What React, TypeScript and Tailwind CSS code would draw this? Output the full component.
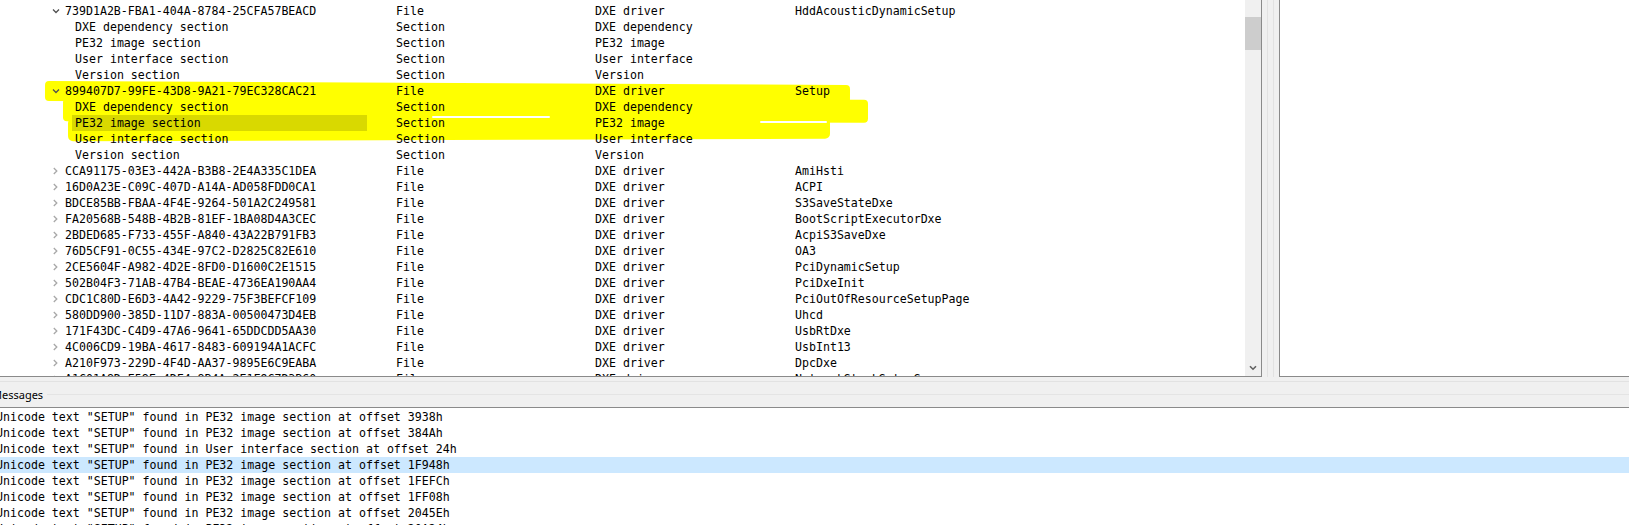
import React from "react";

type TreeRow = {
  name: string;
  parent?: boolean;
  open?: boolean;
  type: string;
  sub: string;
  text?: string;
  selected?: boolean;
};

const sections = (selectedPe32 = false): TreeRow[] => [
  { name: "DXE dependency section", type: "Section", sub: "DXE dependency" },
  { name: "PE32 image section", type: "Section", sub: "PE32 image", selected: selectedPe32 },
  { name: "User interface section", type: "Section", sub: "User interface" },
  { name: "Version section", type: "Section", sub: "Version" },
];

const drivers: [string, string][] = [
  ["CCA91175-03E3-442A-B3B8-2E4A335C1DEA", "AmiHsti"],
  ["16D0A23E-C09C-407D-A14A-AD058FDD0CA1", "ACPI"],
  ["BDCE85BB-FBAA-4F4E-9264-501A2C249581", "S3SaveStateDxe"],
  ["FA20568B-548B-4B2B-81EF-1BA08D4A3CEC", "BootScriptExecutorDxe"],
  ["2BDED685-F733-455F-A840-43A22B791FB3", "AcpiS3SaveDxe"],
  ["76D5CF91-0C55-434E-97C2-D2825C82E610", "OA3"],
  ["2CE5604F-A982-4D2E-8FD0-D1600C2E1515", "PciDynamicSetup"],
  ["502B04F3-71AB-47B4-BEAE-4736EA190AA4", "PciDxeInit"],
  ["CDC1C80D-E6D3-4A42-9229-75F3BEFCF109", "PciOutOfResourceSetupPage"],
  ["580DD900-385D-11D7-883A-00500473D4EB", "Uhcd"],
  ["171F43DC-C4D9-47A6-9641-65DDCDD5AA30", "UsbRtDxe"],
  ["4C006CD9-19BA-4617-8483-609194A1ACFC", "UsbInt13"],
  ["A210F973-229D-4F4D-AA37-9895E6C9EABA", "DpcDxe"],
  ["A1C01A8D-E58F-4DF4-8B4A-2E1F9C7D3B60", "NetworkStackSetupScreen"],
];

const rows: TreeRow[] = [
  { name: "739D1A2B-FBA1-404A-8784-25CFA57BEACD", parent: true, open: true, type: "File", sub: "DXE driver", text: "HddAcousticDynamicSetup" },
  ...sections(),
  { name: "899407D7-99FE-43D8-9A21-79EC328CAC21", parent: true, open: true, type: "File", sub: "DXE driver", text: "Setup" },
  ...sections(true),
  ...drivers.map(([name, text]) => ({ name, parent: true, type: "File", sub: "DXE driver", text })),
];

const messages = [
  'Unicode text "SETUP" found in PE32 image section at offset 3938h',
  'Unicode text "SETUP" found in PE32 image section at offset 384Ah',
  'Unicode text "SETUP" found in User interface section at offset 24h',
  'Unicode text "SETUP" found in PE32 image section at offset 1F948h',
  'Unicode text "SETUP" found in PE32 image section at offset 1FEFCh',
  'Unicode text "SETUP" found in PE32 image section at offset 1FF08h',
  'Unicode text "SETUP" found in PE32 image section at offset 2045Eh',
  'Unicode text "SETUP" found in PE32 image section at offset 20A24h',
];

const mono = "font-['DejaVu_Sans_Mono',monospace] text-[11.6px] leading-4 text-black";

function Chevron({ open }: { open?: boolean }) {
  return (
    <svg width="8" height="8" viewBox="0 0 8 8" className="shrink-0">
      {open ? (
        <path d="M1 2.5 L4 5.5 L7 2.5" fill="none" stroke="#505050" strokeWidth="1.3" />
      ) : (
        <path d="M1.8 1 L4.8 4 L1.8 7" fill="none" stroke="#a8a8a8" strokeWidth="1.3" />
      )}
    </svg>
  );
}

function Row({ row }: { row: TreeRow }) {
  return (
    <div className="flex h-4 items-center whitespace-pre">
      <div className="flex w-[396px] shrink-0 items-center">
        {row.parent ? (
          <div className="flex items-center pl-[52px]">
            <Chevron open={row.open} />
            <span className="ml-[5px]">{row.name}</span>
          </div>
        ) : (
          <div className="pl-[72px]">
            <span className={`block h-4 w-[295px] pl-[3px] ${row.selected ? "bg-[#d9d900]" : ""}`}>{row.name}</span>
          </div>
        )}
      </div>
      <div className="w-[199px] shrink-0">{row.type}</div>
      <div className="w-[200px] shrink-0">{row.sub}</div>
      <div>{row.text ?? ""}</div>
    </div>
  );
}

function Highlighter() {
  // marker strokes drawn over the screenshot, text stays on top
  return (
    <div className="pointer-events-none absolute inset-0">
      <div className="absolute left-[45px] top-[83px] h-[20px] w-[805px] rotate-[0.28deg] rounded-[4px] bg-[#ffff00]" />
      <div className="absolute left-[63px] top-[99px] h-[23px] w-[805px] rotate-[0.1deg] rounded-[4px] bg-[#ffff00]" />
      <div className="absolute left-[68px] top-[117px] h-[23px] w-[762px] -rotate-[0.2deg] rounded-[5px] bg-[#ffff00]" />
      <div className="absolute left-[432px] top-[116px] h-[2px] w-[118px] rounded-full bg-white" />
      <div className="absolute left-[760px] top-[121px] h-[2px] w-[67px] rounded-full bg-white" />
    </div>
  );
}

export default function App() {
  return (
    <div className="flex h-[525px] w-[1629px] flex-col overflow-hidden bg-white">
      <div className="flex h-[377px] shrink-0">
        <div className="flex w-[1262px] shrink-0 border-b border-r border-[#8a8a8a]">
          <div className="relative flex-1 overflow-hidden">
            <Highlighter />
            <div className={`relative pt-[3px] ${mono}`}>
              {rows.map((r, i) => (
                <Row key={i} row={r} />
              ))}
            </div>
          </div>
          <div className="flex w-4 shrink-0 flex-col bg-[#f0f0f0]">
            <div className="mt-[17px] h-[33px] bg-[#cdcdcd]" />
            <div className="flex-1" />
            <div className="flex h-4 items-center justify-center">
              <svg width="8" height="6" viewBox="0 0 8 6">
                <path d="M1 1.2 L4 4.2 L7 1.2" fill="none" stroke="#606060" strokeWidth="1.6" />
              </svg>
            </div>
          </div>
        </div>
        <div className="flex w-[17px] shrink-0 bg-[#f0f0f0] pl-[5px]">
          <div className="w-px bg-[#e2e2e2]" />
          <div className="ml-[5px] w-px bg-[#e2e2e2]" />
        </div>
        <div className="flex-1 border-b border-l border-[#8a8a8a] bg-white" />
      </div>

      <div className="h-[5px] shrink-0 border-b border-[#e2e2e2] bg-[#f0f0f0]" />
      <div className="flex h-[26px] shrink-0 items-center border-b border-[#8a8a8a] bg-[#f0f0f0]">
        <span className="ml-[-8px] font-['Noto_Sans',sans-serif] text-[11px] leading-none text-black">Messages</span>
        <div className="ml-1 h-px flex-1 bg-[#e4e4e4]" />
      </div>

      <div className={`flex-1 pt-px ${mono}`}>
        {messages.map((m, i) => (
          <div key={i} className={`h-4 whitespace-pre ${i === 3 ? "bg-[#cce8ff]" : ""}`}>
            <span className="ml-[-4px]">{m}</span>
          </div>
        ))}
      </div>
    </div>
  );
}
